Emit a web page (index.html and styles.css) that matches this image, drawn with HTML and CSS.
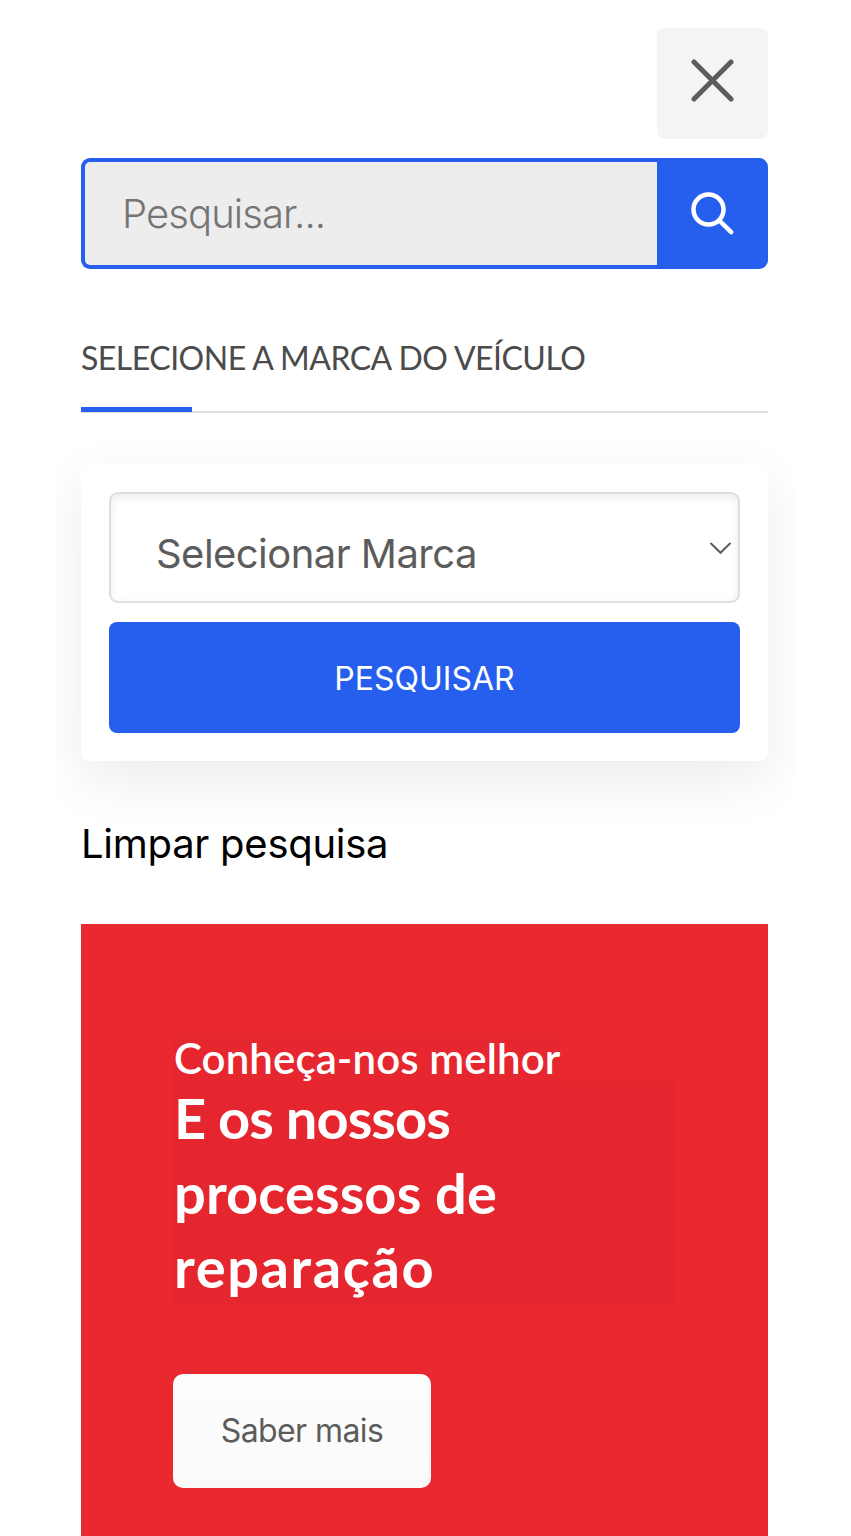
FILE: index.html
```html
<!DOCTYPE html>
<html lang="pt">
<head>
<meta charset="utf-8">
<meta name="viewport" content="width=device-width, initial-scale=1">
<title>Pesquisar</title>
<link rel="stylesheet" href="styles.css">
</head>
<body>
	<div class="panel">
		<button class="closeBtn" aria-label="Fechar">
			<svg width="44" height="44" viewBox="0 0 44 44"><path d="M3 3 40 40M40 3 3 40"/></svg>
		</button>

		<form class="searchBar">
			<input class="searchInput" type="text" placeholder="Pesquisar...">
			<button class="searchBtn" type="button" aria-label="Pesquisar">
				<svg width="44" height="44" viewBox="0 0 44 44"><circle cx="17.5" cy="17.5" r="15"/><path d="M28.3 28.5 40.2 40.2"/></svg>
			</button>
		</form>

		<h2 class="title">SELECIONE A MARCA DO VEÍCULO</h2>

		<!-- brand filter -->
		<div class="card">
			<div class="select">
				<span>Selecionar Marca</span>
				<svg width="22" height="14" viewBox="0 0 22 14"><path d="M2 2.5 11.5 11.8 21 2.5"/></svg>
			</div>
			<button class="submit">PESQUISAR</button>
		</div>

		<a class="clear">Limpar pesquisa</a>

		<!-- promo -->
		<div class="banner">
			<p class="bannerSub">Conheça-nos melhor</p>
			<h3 class="bannerTitle">
				<span class="line1">E os nossos</span>
				<span class="line2">processos de</span>
				<span class="line3">reparação</span>
			</h3>
			<a class="more">Saber mais</a>
		</div>
	</div>
</body>
</html>
```
FILE: styles.css
```css
:root {
	--blue: #265eed;
	--red: #e9282f;
	--grey: #5c5c5c;
}
* {
	box-sizing: border-box;
}
body {
	margin: 0;
	background: #fff;
	font-family: Inter, sans-serif;
}
button {
	border: 0;
	padding: 0;
	font-family: inherit;
}
svg {
	display: block;
	fill: none;
	stroke-linecap: round;
}

.panel {
	display: flex;
	flex-direction: column;
	width: 740px;
	height: 1536px;
	margin-left: 55px;
	padding: 28px 27px 0 26px;
	overflow: hidden;
}
.closeBtn {
	display: flex;
	align-items: center;
	justify-content: center;
	align-self: flex-end;
	width: 111px;
	height: 111px;
	flex: none;
	padding-bottom: 6px;
	border-radius: 8px;
	background: #f4f4f4;
}
.closeBtn svg {
	stroke: var(--grey);
	stroke-width: 5;
}

.searchBar {
	display: flex;
	flex: none;
	height: 111px;
	margin: 19px 0 0;
	border: 4px solid var(--blue);
	border-width: 4px 0 4px 4px;
	border-radius: 9px;
	background: var(--blue);
}
.searchInput {
	flex: 1;
	min-width: 0;
	border: 0;
	border-radius: 5px 0 0 5px;
	padding: 0 0 0 37px;
	background: #ededed;
	font-family: Inter, sans-serif;
	font-size: 40px;
	font-weight: 300;
	letter-spacing: -0.9px;
}
.searchInput::placeholder {
	color: #757575;
}
.searchBtn {
	display: flex;
	align-items: center;
	justify-content: center;
	width: 111px;
	background: none;
}
.searchBtn svg {
	stroke: #fff;
	stroke-width: 4.5;
}

.title {
	flex: none;
	height: 144px;
	margin: 0;
	padding-top: 67px;
	border-bottom: 2px solid #dedede;
	color: #4b4b4b;
	font-family: Lato, sans-serif;
	font-size: 32px;
	font-weight: 400;
	line-height: 44px;
	letter-spacing: -0.5px;
	white-space: nowrap;
}
/* accent over the rule */
.title::after {
	content: "";
	display: block;
	width: 111px;
	height: 5px;
	margin-top: 27px;
	background: var(--blue);
}

.card {
	display: flex;
	flex-direction: column;
	flex: none;
	gap: 19px;
	margin-top: 51px;
	padding: 28px;
	border-radius: 9px;
	background: #fff;
	box-shadow: 0 19px 56px rgba(0, 0, 0, 0.08);
}
.select {
	display: flex;
	align-items: center;
	justify-content: space-between;
	height: 111px;
	padding: 0 7px 0 45px;
	border: 2px solid #dedede;
	border-radius: 9px;
	box-shadow: inset 0 3px 9px rgba(0, 0, 0, 0.08);
	color: var(--grey);
	font-size: 40px;
	letter-spacing: -0.55px;
}
.select span {
	padding-top: 12px;
}
.select svg {
	stroke: var(--grey);
	stroke-width: 2;
}
.submit {
	height: 111px;
	padding-top: 2px;
	border-radius: 8px;
	background: var(--blue);
	color: #fff;
	font-size: 32px;
}

.clear {
	flex: none;
	margin-top: 58px;
	color: #000;
	font-size: 40px;
	line-height: 50px;
	letter-spacing: -0.27px;
}

.banner {
	flex: 1;
	margin-top: 55px;
	padding: 110px 93px 0 92px;
	background: var(--red);
	color: #fff;
	font-family: Lato, sans-serif;
}
.bannerSub {
	width: 387px;
	margin: 0;
	padding-left: 1px;
	background: #e6272f;
	font-size: 42px;
	font-weight: 600;
	line-height: 49px;
	letter-spacing: 0.1px;
	white-space: nowrap;
}
.bannerTitle {
	margin: -2px 0 0;
	padding-left: 1px;
	background: #e5262e;
	font-size: 56px;
	font-weight: 700;
	line-height: 74.5px;
}
.bannerTitle span {
	display: block;
	white-space: nowrap;
}
.line1 {
	letter-spacing: -0.9px;
}
.line2 {
	letter-spacing: 0.1px;
}
.line3 {
	letter-spacing: 1.6px;
}
.more {
	display: flex;
	align-items: center;
	justify-content: center;
	width: 258px;
	height: 114px;
	margin-top: 69px;
	border-radius: 10px;
	background: linear-gradient(#fdfdfd, #fafafa);
	color: var(--grey);
	font-family: Inter, sans-serif;
	font-size: 32px;
	letter-spacing: -0.6px;
}
```
